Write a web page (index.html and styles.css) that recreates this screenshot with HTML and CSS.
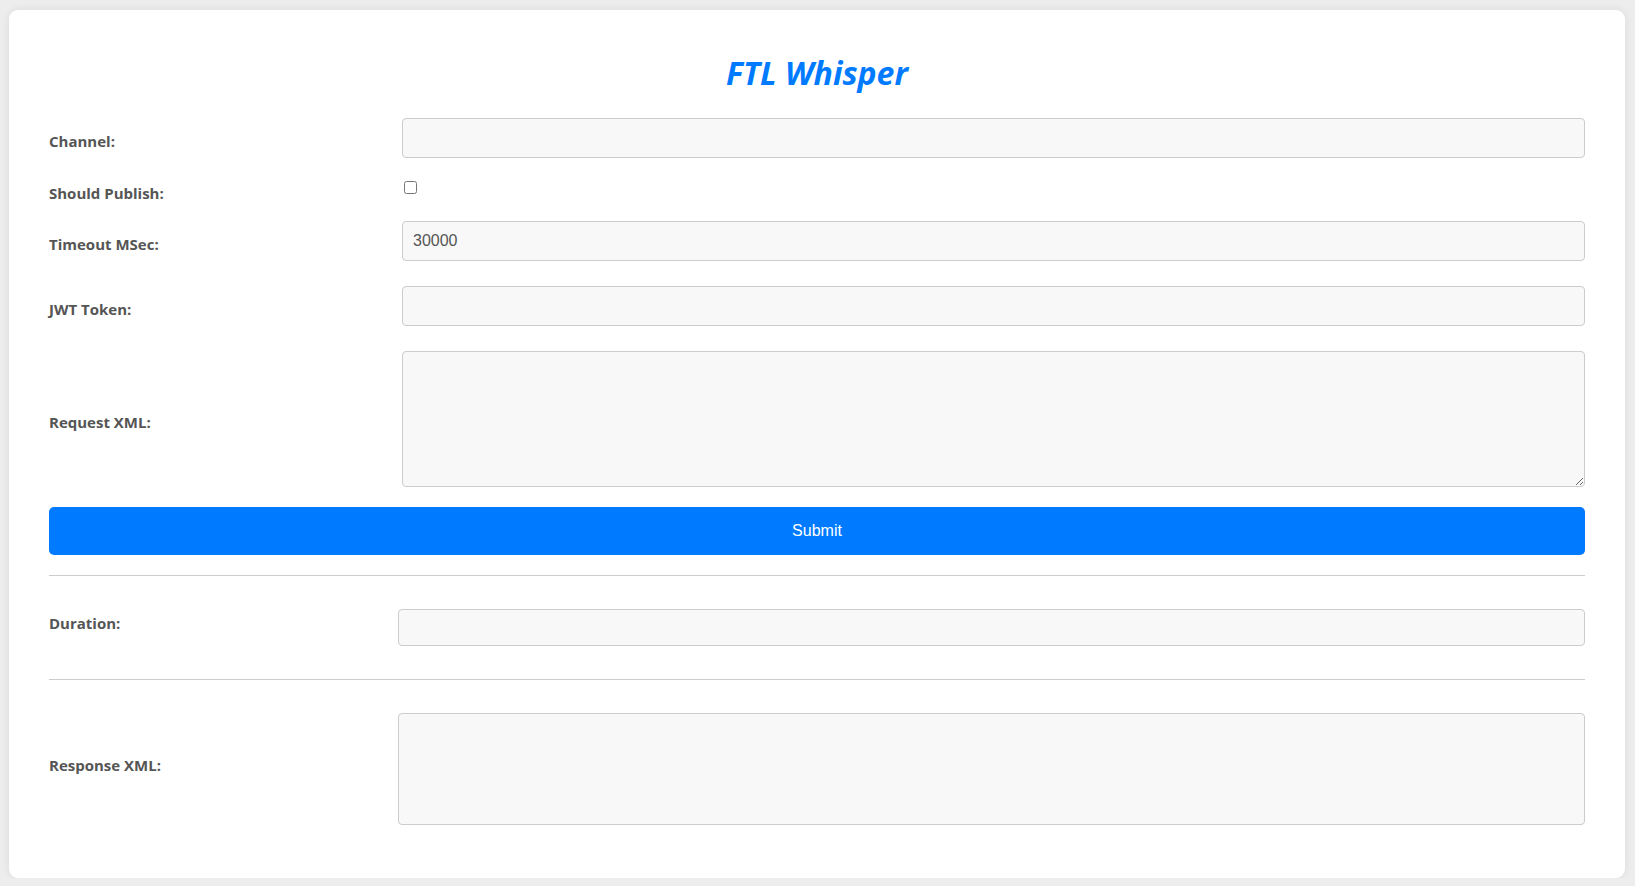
FILE: index.html
```html
<!DOCTYPE html>
<html lang="en">
<head>
<meta charset="utf-8">
<title>FTL Whisper</title>
<link rel="stylesheet" href="styles.css">
</head>
<body>
<div class="page">
  <div class="card">
    <h1 class="title">FTL Whisper</h1>
    <form class="form">
      <div class="row row--first">
        <label class="label" for="channel">Channel:</label>
        <input class="field" id="channel" type="text">
      </div>
      <div class="row row--check">
        <label class="label" for="publish">Should Publish:</label>
        <input class="check" id="publish" type="checkbox">
      </div>
      <div class="row">
        <label class="label" for="timeout">Timeout MSec:</label>
        <input class="field" id="timeout" type="text" value="30000">
      </div>
      <div class="row">
        <label class="label" for="jwt">JWT Token:</label>
        <input class="field" id="jwt" type="text">
      </div>
      <div class="row row--area">
        <label class="label" for="request">Request XML:</label>
        <textarea class="field area" id="request"></textarea>
      </div>
      <button class="submit" type="button">Submit</button>
    </form>
    <hr class="divider">
    <div class="out-row">
      <label class="out-label" for="duration">Duration:</label>
      <input class="field out-field" id="duration" type="text" readonly>
    </div>
    <hr class="divider">
    <div class="out-row">
      <label class="out-label" for="response">Response XML:</label>
      <textarea class="field out-area" id="response" readonly></textarea>
    </div>
  </div>
</div>
</body>
</html>
```

FILE: styles.css
```css
* {
  box-sizing: border-box;
}

body {
  margin: 0;
  background: #ededed;
  font-family: "Open Sans", "Noto Sans", sans-serif;
}

.page {
  padding: 10px 10px 0 9px;
}

.card {
  display: flex;
  flex-direction: column;
  background: #fff;
  border-radius: 9px;
  box-shadow: 0 0 10px rgba(0, 0, 0, 0.08);
  padding: 40px;
}

.title {
  margin: 1px 0 23px;
  font-size: 32px;
  line-height: 44px;
  font-weight: 700;
  font-style: italic;
  color: #007bff;
  text-align: center;
}

.form {
  display: flex;
  flex-direction: column;
}

.row {
  display: flex;
  align-items: center;
  margin-bottom: 25px;
}

.row--first {
  margin-bottom: 23px;
}

.row--check {
  align-items: flex-start;
  margin-bottom: 18px;
}

.row--area {
  margin-bottom: 20px;
}

.label,
.out-label {
  font-size: 15px;
  line-height: 20px;
  font-weight: 700;
  color: #555;
}

.label {
  flex: 0 0 353px;
  padding-top: 6px;
}

.row--check .label {
  padding-top: 2px;
}

.field {
  flex: 1;
  min-width: 0;
  height: 40px;
  padding: 0 10px;
  border: 1px solid #ccc;
  border-radius: 4px;
  background: #f8f8f8;
  font-family: "Liberation Sans", Arial, sans-serif;
  font-size: 16px;
  color: #555;
  outline: none;
}

.area {
  height: 136px;
  padding: 10px;
  resize: vertical;
}

.check {
  width: 13px;
  height: 13px;
  margin: 0 0 0 2px;
}

.submit {
  height: 48px;
  border: 0;
  border-radius: 5px;
  background: #007bff;
  color: #fff;
  font-family: "Liberation Sans", Arial, sans-serif;
  font-size: 16px;
  cursor: pointer;
}

.divider {
  width: 100%;
  height: 0;
  margin: 20px 0;
  border: 0;
  border-top: 1px solid #ccc;
}

.out-row {
  display: flex;
  align-items: center;
  margin: 13px 0;
}

.out-label {
  flex: 0 0 349px;
  margin-bottom: 9px;
}

.out-field {
  height: 37px;
}

.out-area {
  height: 112px;
  padding: 10px;
  resize: none;
}
```
